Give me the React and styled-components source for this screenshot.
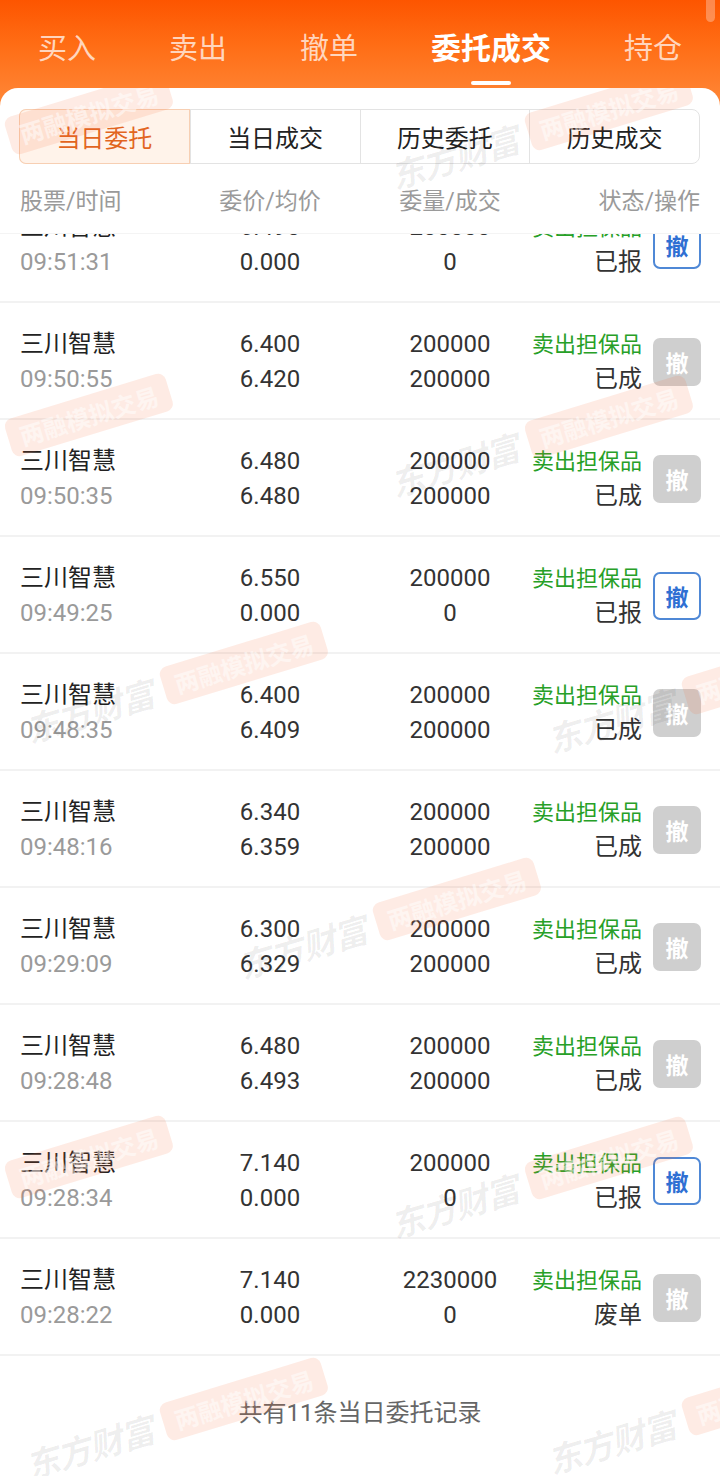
import React from 'react';
import styled, { createGlobalStyle } from 'styled-components';

const Global = createGlobalStyle`
  html, body { margin: 0; padding: 0; }
  body {
    width: 720px;
    height: 1476px;
    overflow: hidden;
    background: #fff;
    font-family: Roboto, "Noto Sans CJK SC", sans-serif;
  }
`;

const Page = styled.div`
  position: relative;
  width: 720px;
  height: 1476px;
  display: flex;
  flex-direction: column;
  overflow: hidden;
  background: linear-gradient(180deg, #fd5500 0px, #ff6d15 45px, #ff8c3e 115px);
`;

const ScrollHint = styled.div`
  position: absolute;
  top: -6px;
  right: 5px;
  width: 9px;
  height: 28px;
  border-radius: 5px;
  background: rgba(255, 255, 255, 0.3);
`;

const TopTabs = styled.nav`
  display: flex;
  gap: 73px;
  height: 88px;
  box-sizing: border-box;
  padding: 29px 0 0 38px;
`;

const TopTab = styled.div`
  display: flex;
  flex-direction: column;
  align-items: center;
  font-size: ${p => (p.$active ? 30 : 29)}px;
  line-height: 40px;
  font-weight: ${p => (p.$active ? 700 : 400)};
  color: ${p => (p.$active ? '#fff' : 'rgba(255,255,255,0.72)')};
  white-space: nowrap;
`;

const Indicator = styled.span`
  width: 40px;
  height: 4px;
  border-radius: 2px;
  margin-top: 12px;
  background: #fff;
`;

const Card = styled.section`
  position: relative;
  flex: 1;
  display: flex;
  flex-direction: column;
  background: #fff;
  border-radius: 18px 18px 0 0;
  overflow: hidden;
`;

const Segmented = styled.div`
  display: grid;
  grid-template-columns: repeat(4, 1fr);
  height: 55px;
  box-sizing: border-box;
  margin: 21px 20px 0 19px;
  border: 1px solid #e3e3e3;
  border-radius: 8px;
`;

const Seg = styled.div`
  display: flex;
  align-items: center;
  justify-content: center;
  font-size: 24px;
  color: ${p => (p.$active ? '#e2651f' : '#222')};
  background: ${p => (p.$active ? '#fff3ea' : 'transparent')};
  border-left: ${p => (p.$first ? 'none' : '1px solid #e3e3e3')};
  border-radius: ${p => (p.$first ? '7px 0 0 7px' : '0')};
  box-shadow: ${p => (p.$active ? 'inset 0 0 0 1px #f7cfb3' : 'none')};
  margin: ${p => (p.$active ? '-1px 0 -1px -1px' : '0')};
`;

const ColumnHeader = styled.div`
  display: grid;
  grid-template-columns: 150px 200px 160px 1fr;
  height: 70px;
  box-sizing: border-box;
  padding: 1px 20px 0 20px;
  align-items: center;
  font-size: 23px;
  color: #9a9a9a;
  border-bottom: 1px solid #f4f4f4;
`;

const HeadCell = styled.div`
  text-align: ${p => p.$align || 'left'};
`;

const Viewport = styled.div`
  flex: 1;
  overflow: hidden;
`;

const List = styled.div`
  margin-top: -48px;
`;

const Row = styled.div`
  display: grid;
  grid-template-columns: 150px 200px 160px 123px 48px;
  height: 117px;
  box-sizing: border-box;
  padding: 2px 19px 0 20px;
  align-items: center;
  border-bottom: 2px solid #f2f2f2;
`;

const Cell = styled.div`
  display: flex;
  flex-direction: column;
  align-items: ${p => p.$align || 'flex-start'};
  padding-right: ${p => p.$pr || 0}px;
  line-height: 35px;
  white-space: nowrap;
`;

const Line = styled.span`
  font-size: ${p => p.$size || 24}px;
  color: ${p => p.$color || '#333'};
`;

const CancelBtn = styled.div`
  width: 48px;
  height: 48px;
  box-sizing: border-box;
  border-radius: 7px;
  display: flex;
  align-items: center;
  justify-content: center;
  font-size: 23px;
  font-weight: 700;
  color: ${p => (p.$enabled ? '#2f6fd3' : '#fff')};
  background: ${p => (p.$enabled ? '#fff' : '#cfcfcf')};
  border: ${p => (p.$enabled ? '2px solid #4f88d6' : 'none')};
`;

const Footer = styled.div`
  padding-top: 40px;
  text-align: center;
  font-size: 24px;
  line-height: 34px;
  color: #666;
`;

const WatermarkLayer = styled.div`
  position: absolute;
  inset: 0;
  pointer-events: none;
  overflow: hidden;
`;

const WmUnit = styled.div`
  position: absolute;
  display: flex;
  align-items: center;
  gap: 12px;
  transform: translate(-50%, -50%) rotate(-17deg);
  white-space: nowrap;
`;

const WmBrand = styled.span`
  font-size: 34px;
  font-weight: 700;
  font-style: italic;
  color: rgba(0, 0, 0, 0.065);
  letter-spacing: -1px;
`;

const WmPill = styled.span`
  padding: 2px 12px;
  border-radius: 8px;
  font-size: 24px;
  font-weight: 700;
  color: rgba(255, 255, 255, 0.5);
  background: rgba(250, 100, 50, 0.13);
`;

const tabs = ['买入', '卖出', '撤单', '委托成交', '持仓'];
const segs = ['当日委托', '当日成交', '历史委托', '历史成交'];

const rows = [
  ['09:51:31', '6.490', '0.000', '200000', '0', '已报', true],
  ['09:50:55', '6.400', '6.420', '200000', '200000', '已成', false],
  ['09:50:35', '6.480', '6.480', '200000', '200000', '已成', false],
  ['09:49:25', '6.550', '0.000', '200000', '0', '已报', true],
  ['09:48:35', '6.400', '6.409', '200000', '200000', '已成', false],
  ['09:48:16', '6.340', '6.359', '200000', '200000', '已成', false],
  ['09:29:09', '6.300', '6.329', '200000', '200000', '已成', false],
  ['09:28:48', '6.480', '6.493', '200000', '200000', '已成', false],
  ['09:28:34', '7.140', '0.000', '200000', '0', '已报', true],
  ['09:28:22', '7.140', '0.000', '2230000', '0', '废单', false],
];

// watermark unit centres, relative to the card
const marks = [
  [20, 46], [540, 42], [20, 348], [540, 350], [175, 596], [697, 606],
  [388, 832], [20, 1090], [540, 1091], [175, 1332], [697, 1327],
];

export default function App() {
  return (
    <>
      <Global />
      <Page>
        <ScrollHint />
        <TopTabs>
          {tabs.map(t => (
            <TopTab key={t} $active={t === '委托成交'}>
              {t}
              {t === '委托成交' && <Indicator />}
            </TopTab>
          ))}
        </TopTabs>
        <Card>
          <Segmented>
            {segs.map((s, i) => (
              <Seg key={s} $active={i === 0} $first={i === 0}>{s}</Seg>
            ))}
          </Segmented>
          <ColumnHeader>
            <HeadCell>股票/时间</HeadCell>
            <HeadCell $align="center">委价/均价</HeadCell>
            <HeadCell $align="center">委量/成交</HeadCell>
            <HeadCell $align="right">状态/操作</HeadCell>
          </ColumnHeader>
          <Viewport>
            <List>
              {rows.map(([time, p1, p2, q1, q2, st, can]) => (
                <Row key={time}>
                  <Cell>
                    <Line $color="#222">三川智慧</Line>
                    <Line $color="#9a9a9a">{time}</Line>
                  </Cell>
                  <Cell $align="center">
                    <Line>{p1}</Line>
                    <Line>{p2}</Line>
                  </Cell>
                  <Cell $align="center">
                    <Line>{q1}</Line>
                    <Line>{q2}</Line>
                  </Cell>
                  <Cell $align="flex-end" $pr={11}>
                    <Line $size={22} $color="#27a027">卖出担保品</Line>
                    <Line>{st}</Line>
                  </Cell>
                  <CancelBtn $enabled={can}>撤</CancelBtn>
                </Row>
              ))}
            </List>
            <Footer>共有11条当日委托记录</Footer>
          </Viewport>
          <WatermarkLayer>
            {marks.map(([x, y], i) => (
              <WmUnit key={i} style={{ left: x, top: y }}>
                <WmBrand>东方财富</WmBrand>
                <WmPill>两融模拟交易</WmPill>
              </WmUnit>
            ))}
          </WatermarkLayer>
        </Card>
      </Page>
    </>
  );
}
